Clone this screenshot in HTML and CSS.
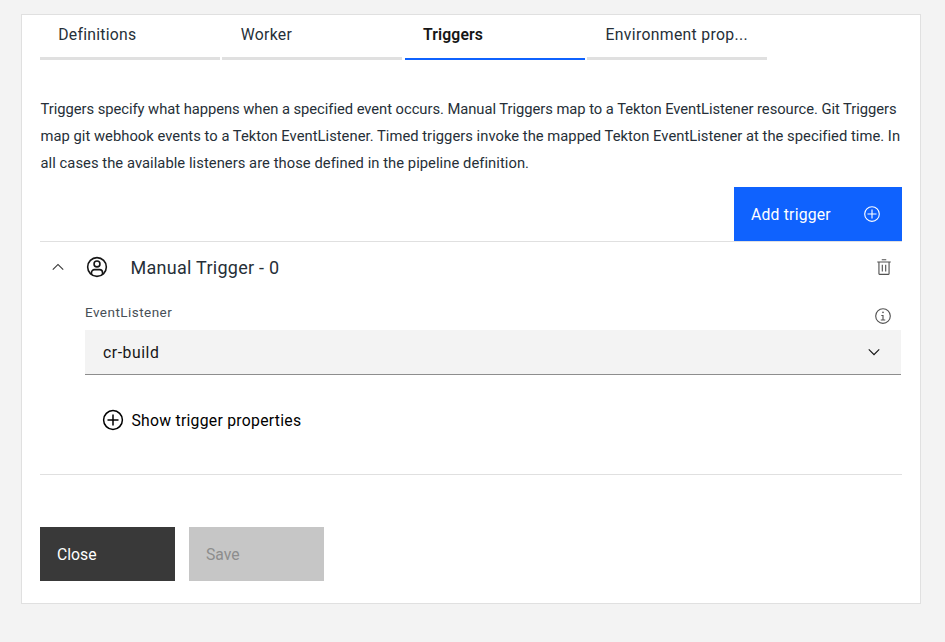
FILE: index.html
```html
<!DOCTYPE html>
<html lang="en">
<head>
<meta charset="utf-8">
<title>Triggers</title>
<link rel="stylesheet" href="styles.css">
</head>
<body>
<main class="card">
  <nav class="tabs">
    <a class="tab"><span class="t-def">Definitions</span></a>
    <a class="tab"><span class="t-work">Worker</span></a>
    <a class="tab active"><span class="t-trig">Triggers</span></a>
    <a class="tab"><span class="t-env">Environment prop...</span></a>
  </nav>
  <p class="intro">
    <span class="l1">Triggers specify what happens when a specified event occurs. Manual Triggers map to a Tekton EventListener resource. Git Triggers</span>
    <span class="l2">map git webhook events to a Tekton EventListener. Timed triggers invoke the mapped Tekton EventListener at the specified time. In</span>
    <span class="l3">all cases the available listeners are those defined in the pipeline definition.</span>
  </p>
  <div class="toolbar">
    <button class="btn add"><span>Add trigger</span>
      <svg width="18" height="18" viewBox="0 0 32 32" fill="currentColor"><path d="M16 4A12 12 0 1 1 4 16 12 12 0 0 1 16 4m0-2a14 14 0 1 0 14 14A14 14 0 0 0 16 2Z"/><path d="M24 15h-7V8h-2v7H8v2h7v7h2v-7h7z"/></svg>
    </button>
  </div>
  <section class="trigger">
    <header class="head">
      <svg class="chev" width="18" height="18" viewBox="0 0 16 16" fill="#393939"><path d="M8 5l5 5-.7.7L8 6.4l-4.3 4.3L3 10z"/></svg>
      <svg class="user" width="22" height="22" viewBox="0 0 32 32" fill="none" stroke="#161616" stroke-width="2.3"><circle cx="16" cy="16" r="13.6"/><circle cx="16" cy="11.5" r="4.3"/><path d="M8 26.8V24a4.2 4.2 0 0 1 4.2-4.2h7.6A4.2 4.2 0 0 1 24 24v2.8"/></svg>
      <h2><span>Manual Trigger - 0</span></h2>
      <svg class="trash" width="18" height="18" viewBox="0 0 32 32" fill="#525252"><path d="M12 12h2v12h-2zM18 12h2v12h-2z"/><path d="M4 6v2h2v20a2 2 0 0 0 2 2h16a2 2 0 0 0 2-2V8h2V6Zm4 22V8h16v20ZM12 2h8v2h-8z"/></svg>
    </header>
    <div class="field">
      <div class="label"><span>EventListener</span>
        <svg width="18" height="18" viewBox="0 0 32 32" fill="#525252"><path d="M17 22v-8h-4v2h2v6h-3v2h8v-2zM16 8a1.5 1.5 0 1 0 1.5 1.5A1.5 1.5 0 0 0 16 8Z"/><path d="M16 30a14 14 0 1 1 14-14 14 14 0 0 1-14 14Zm0-26a12 12 0 1 0 12 12A12 12 0 0 0 16 4Z"/></svg>
      </div>
      <div class="select"><span>cr-build</span>
        <svg width="18" height="18" viewBox="0 0 16 16" fill="#161616"><path d="M8 11L3 6l.7-.7L8 9.6l4.3-4.3.7.7z"/></svg>
      </div>
    </div>
    <div class="more">
      <svg width="22" height="22" viewBox="0 0 22 22" fill="none" stroke="#000" stroke-width="1.5"><circle cx="11" cy="11" r="9.4"/><path d="M11 5.5v11M5.5 11h11"/></svg>
      <span>Show trigger properties</span>
    </div>
  </section>
  <footer class="actions">
    <button class="btn close"><span>Close</span></button>
    <button class="btn save" disabled><span>Save</span></button>
  </footer>
</main>
</body>
</html>
```
FILE: styles.css
```css
* { box-sizing: border-box; }
body { margin: 0; padding: 14px 24px 0 21px; height: 642px; background: #f3f3f3; font-family: Roboto, "Liberation Sans", sans-serif; font-size: 15.75px; color: #262f38; overflow: hidden; }
svg { display: block; flex: none; }
span { white-space: nowrap; }
.card { height: 590px; border: 1px solid #e0e0e0; background: #fff; padding: 0 18px; }
.tabs { display: grid; grid-template-columns: 180px 180px 180px 180px; column-gap: 2.4px; height: 45px; }
.tab { border-bottom: 3px solid #e0e0e0; padding: 10px 0 0 18.3px; line-height: 20px; }
.tab.active { border-bottom: 2px solid #0f62fe; color: #161616; font-weight: 600; }
.t-def { letter-spacing: .24px; }
.t-work { letter-spacing: .3px; }
.t-trig { letter-spacing: .1px; }
.t-env { letter-spacing: .33px; }
.intro { margin: 36px 0 0 .5px; line-height: 27px; font-size: 14.75px; }
.intro span { display: block; }
.l1 { letter-spacing: -.04px; }
.l2 { letter-spacing: .03px; }
.l3 { letter-spacing: .05px; }
.toolbar { display: flex; justify-content: flex-end; margin-top: 10px; }
.btn { display: flex; align-items: center; justify-content: space-between; height: 54px; border: 0; padding: 0 17px; font: inherit; color: #fff; }
.add { width: 168px; padding-right: 21px; background: #0f62fe; letter-spacing: .2px; }
.trigger { height: 234px; border: solid #e0e0e0; border-width: 1px 0; }
.head { display: flex; align-items: center; height: 50px; padding: 0 9px; }
.user { margin-left: 18.5px; }
.head h2 { margin: 0 auto 0 23px; font-size: 18px; font-weight: 400; line-height: 26px; letter-spacing: .27px; padding-top: 1px; }
.field { margin: 6px 1px 0 45px; }
.label { display: flex; justify-content: space-between; height: 32px; font-size: 13.5px; line-height: 28px; letter-spacing: .46px; color: #474f57; padding-right: 9px; }
.label svg { margin-top: 9px; }
.select { display: flex; align-items: center; justify-content: space-between; height: 45px; padding: 0 18px; background: #f3f3f3; border-bottom: 1px solid #8d8d8d; color: #161616; letter-spacing: .55px; }
.more { display: flex; align-items: center; gap: 7px; margin: 34px 0 0 62.4px; height: 22px; color: #000; letter-spacing: .27px; }
.actions { display: flex; gap: 14px; margin-top: 52px; }
.actions .btn { width: 135px; }
.close { background: #393939; }
.save { background: #c6c6c6; color: #8d8d8d; }
```
